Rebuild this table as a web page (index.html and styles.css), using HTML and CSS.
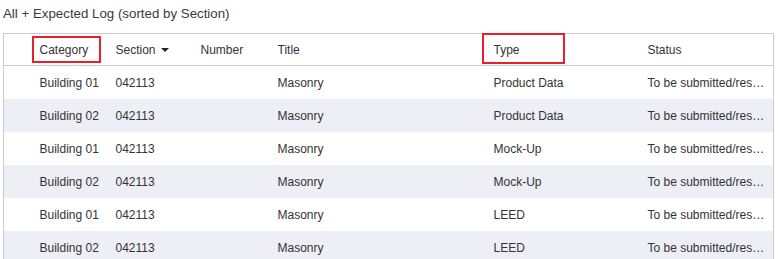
FILE: index.html
```html
<!DOCTYPE html>
<html lang="en">
<head>
    <meta charset="UTF-8">
    <meta name="viewport" content="width=device-width, initial-scale=1.0">
    <title>Expected Log</title>
    <link rel="stylesheet" href="styles.css">
</head>
<body>

    <div class="log-title">All + Expected Log (sorted by Section)</div>

    <div class="grid-wrap">
        <table class="grid">
            <colgroup>
                <col class="c-select">
                <col class="c-category">
                <col class="c-section">
                <col class="c-number">
                <col class="c-title">
                <col class="c-type">
                <col class="c-status">
            </colgroup>
            <thead>
                <tr>
                    <th></th>
                    <th>Category</th>
                    <th>Section <span class="sort-down"></span></th>
                    <th>Number</th>
                    <th>Title</th>
                    <th>Type</th>
                    <th>Status</th>
                </tr>
            </thead>
            <tbody>
                <tr><td></td><td>Building 01</td><td>042113</td><td></td><td>Masonry</td><td>Product Data</td><td>To be submitted/resubmitted</td></tr>
                <tr><td></td><td>Building 02</td><td>042113</td><td></td><td>Masonry</td><td>Product Data</td><td>To be submitted/resubmitted</td></tr>
                <tr><td></td><td>Building 01</td><td>042113</td><td></td><td>Masonry</td><td>Mock-Up</td><td>To be submitted/resubmitted</td></tr>
                <tr><td></td><td>Building 02</td><td>042113</td><td></td><td>Masonry</td><td>Mock-Up</td><td>To be submitted/resubmitted</td></tr>
                <tr><td></td><td>Building 01</td><td>042113</td><td></td><td>Masonry</td><td>LEED</td><td>To be submitted/resubmitted</td></tr>
                <tr><td></td><td>Building 02</td><td>042113</td><td></td><td>Masonry</td><td>LEED</td><td>To be submitted/resubmitted</td></tr>
            </tbody>
        </table>

        <!-- highlight boxes over the column headers -->
        <div class="mark mark-category"></div>
        <div class="mark mark-type"></div>
    </div>

</body>
</html>
```

FILE: styles.css
```css
body {
    margin: 0;
    padding: 0;
    background: #ffffff;
    font-family: "Liberation Sans", Arial, sans-serif;
    color: #333333;
}
.log-title {
    font-size: 13.3px;
    line-height: 16px;
    padding: 6px 0 0 3px;
    height: 27px;
    color: #3a3a3a;
}
.grid-wrap {
    position: relative;
    margin-left: 3px;
    width: 771px;
}
.grid {
    width: 771px;
    table-layout: fixed;
    border-collapse: collapse;
    border: 1px solid #cccccc;
    font-size: 12px;
}
.c-select { width: 28px; }
.c-category { width: 76px; }
.c-section { width: 85px; }
.c-number { width: 77px; }
.c-title { width: 216px; }
.c-type { width: 154px; }
.grid th {
    font-weight: normal;
    text-align: left;
    height: 31px;
    padding: 0 8px;
    border-bottom: 1px solid #cccccc;
    white-space: nowrap;
}
.grid td {
    height: 33px;
    padding: 0 8px;
    white-space: nowrap;
    overflow: hidden;
    text-overflow: ellipsis;
}
.grid tbody tr:nth-child(even) {
    background: #eeeef6;
}
.sort-down {
    display: inline-block;
    width: 0;
    height: 0;
    margin-left: 2px;
    vertical-align: 2px;
    border-left: 4px solid transparent;
    border-right: 4px solid transparent;
    border-top: 4px solid #222222;
}
.mark {
    position: absolute;
    border: 2px solid #e8202a;
    box-sizing: border-box;
}
.mark-category {
    left: 29px;
    top: 3px;
    width: 69px;
    height: 27px;
}
.mark-type {
    left: 479px;
    top: 0;
    width: 83px;
    height: 31px;
}
```
